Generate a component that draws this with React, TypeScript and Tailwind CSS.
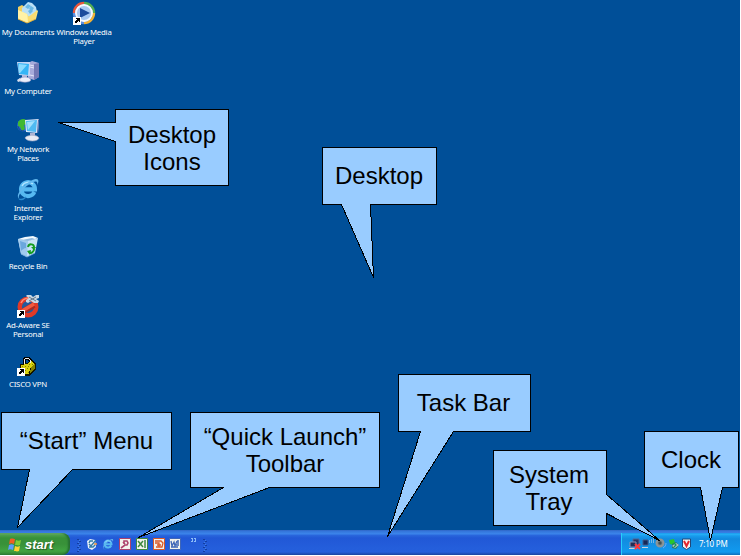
import type { ReactNode } from "react";

function Shortcut() {
  return (
    <g shapeRendering="crispEdges">
      <rect x="1" y="16" width="8" height="8" fill="#fff" />
      <path d="M3 22v-2h1v-1h1v-1h-1v-1h4v4h-1v-1h-1v1h-1v1z" fill="#000" />
    </g>
  );
}

function DocumentsIcon() {
  return (
    <svg viewBox="0 0 24 24" className="size-6 shrink-0">
      <path d="M2 6l4-2 4 3v9l-8 2z" fill="#f0cf63" />
      <path d="M6 7l6-6 4 1 4 4 1 5-8 5-7-4z" fill="#b9e0f7" />
      <path d="M9 6l3-3 3 2-3 3zM15 5l3 2-2 3-3-2zM12 10l3-2 2 2-3 3z" fill="#69b8e6" />
      <path d="M2 9l9 4 2 3 8-7 1 1-2 8-9 4-9-4z" fill="#fbe682" />
      <path d="M2 9l9 4 1 9-10-4z" fill="#fff2a6" />
      <path d="M12 16l9-6-2 8-7 4z" fill="#f9dc70" />
      <path d="M2 18l9 4 9-4" fill="none" stroke="#dfab39" strokeWidth=".9" />
    </svg>
  );
}

function MediaPlayerIcon() {
  return (
    <svg viewBox="0 0 24 24" className="size-6 shrink-0">
      <circle cx="12" cy="12" r="9" fill="#dbe8fa" />
      <path d="M2 12A10 10 0 0 1 12 2" stroke="#e8573c" strokeWidth="2.4" fill="none" />
      <path d="M12 2a10 10 0 0 1 10 10" stroke="#54ad52" strokeWidth="2.4" fill="none" />
      <path d="M22 12a10 10 0 0 1-10 10" stroke="#f2b235" strokeWidth="2.4" fill="none" />
      <path d="M12 22A10 10 0 0 1 2 12" stroke="#5c8fe0" strokeWidth="2.4" fill="none" />
      <circle cx="12" cy="12" r="8" fill="#a9c8f2" stroke="#f5f9ff" strokeWidth="1.8" />
      <path d="M8 7l10 5-10 5z" fill="#1c4a9c" />
      <Shortcut />
    </svg>
  );
}

function ComputerIcon() {
  return (
    <svg viewBox="0 0 24 24" className="size-6 shrink-0">
      <path d="M12 3l4-2 7 2v14l-5 3-6-2z" fill="#a7abda" />
      <path d="M18 4l5-1v14l-5 3z" fill="#7378b4" />
      <path d="M14 5l4 1M14 7l4 1M14 15l4 1" stroke="#e6e8fa" />
      <path d="M1 2h13v14L3 15z" fill="#c4d5f4" />
      <path d="M2 3l11 1-1 11-9-1z" fill="#35b5f6" />
      <path d="M3 4l8 1-7 8H3z" fill="#8bdcff" />
      <path d="M6 15h5v4H6z" fill="#b9bee0" />
      <path d="M3 20c1-4 11-4 12 0-1 3-11 3-12 0z" fill="#eceefa" stroke="#8d91be" strokeWidth=".6" />
      <path d="M1 20l3-2 1 3-3 1z" fill="#d9ddec" />
    </svg>
  );
}

function NetworkIcon() {
  return (
    <svg viewBox="0 0 24 24" className="size-6 shrink-0">
      <circle cx="7" cy="7.5" r="6" fill="#2467ca" />
      <path d="M2 4c2-3 6-4 8-2l1 4-3 1 1 4-3 2-2-4-2-1z" fill="#41b832" />
      <path d="M2 8c0 3 3 5 6 5" stroke="#154492" fill="none" />
      <path d="M9 2l14-1-1 14-12-1z" fill="#dfe9fc" />
      <path d="M10 3l11-1-1 12-9-1z" fill="#50baf2" />
      <path d="M11 4l8-1-7 9z" fill="#a3e0fd" />
      <path d="M22 1l1 1-1 13h-1z" fill="#5169a6" />
      <path d="M14 15h5v4h-5z" fill="#aeb4d2" />
      <path d="M9 20c1-3 12-4 14 0-1 4-12 4-14 0z" fill="#e8eaf3" stroke="#a0a6c4" strokeWidth=".6" />
    </svg>
  );
}

function ExplorerGlyph({ className }: { className: string }) {
  return (
    <svg viewBox="0 0 24 24" className={className}>
      <path d="M18.4 15A7 7 0 1 1 19 12.4H7" fill="none" stroke="#56b9f1" strokeWidth="4.1" />
      <path d="M6 9c2-4 8-5 11-2" fill="none" stroke="#b2e4ff" strokeWidth="1.4" />
      <path d="M3 22c-5-4 8-19 17-20 3 0 3 3 1 6 1-4-1-4-4-3C8 9 1 19 3 22z" fill="#62b8ee" />
      <path d="M3 22c2 1 5 0 7-2" fill="none" stroke="#2b8cd0" strokeWidth="1.3" />
    </svg>
  );
}

function RecycleIcon() {
  return (
    <svg viewBox="0 0 24 24" className="size-6 shrink-0">
      <path d="M2 4l10 2 10-3-3 15-8 4-6-3z" fill="#c8e2f7" />
      <path d="M2 4l10 2-1 16-6-3z" fill="#a0caee" />
      <path d="M4 6l6 2v5c-2 0-4 2-5 3z" fill="#6ba7de" />
      <path d="M2 4l7-2 8-1 5 2-9 3z" fill="#f2faff" />
      <path d="M6 5l5-1 5-1 3 1-7 2z" fill="#8ebae0" />
      <path d="M12 12c1-4 6-3 6 0M18 14c0 3-3 5-5 3" fill="none" stroke="#159b20" strokeWidth="2" />
      <path d="M15 12l5 0-2 3zM15 15l-4 1 3 4z" fill="#159b20" />
      <path d="M5 19l6 3 8-4" fill="none" stroke="#6aa5d5" strokeWidth=".8" />
    </svg>
  );
}

function AdAwareIcon() {
  return (
    <svg viewBox="0 0 24 24" className="size-6 shrink-0">
      <circle cx="12" cy="13" r="8.3" fill="#215b9d" stroke="#df3a28" strokeWidth="4.4" />
      <path d="M5 9c2-5 8-6 11-4" stroke="#ff8c72" strokeWidth="1.5" fill="none" />
      <path d="M6 18L18 11" stroke="#a92a22" strokeWidth="6" />
      <path d="M6 17L18 10" stroke="#f35a3f" strokeWidth="3.5" />
      <path d="M11 1h4l2 2 3-2h3v3l-3 1 3 2-1 2h-4l-3-2-3 2-2-1v-2l3-2-3-2z" fill="#c9d7e3" />
      <path d="M13 3l7 4M20 3l-7 4" stroke="#63798b" strokeWidth="1" />
      <Shortcut />
    </svg>
  );
}

function VpnIcon() {
  return (
    <svg viewBox="0 0 24 24" className="mt-[3px] -mb-[3px] size-6 shrink-0" shapeRendering="crispEdges">
      <path d="M8 9V4l2-2h2l2 2v4" fill="none" stroke="#000" strokeWidth="3" />
      <path d="M8 8V4l2-2h2l2 2v4" fill="none" stroke="#eee" />
      <path d="M4 8l7-1 6-3 3 4v6l-7 6-8-1-1-5z" fill="#151500" />
      <path d="M5 9l6-1 4-3 3 3-4 4-1 6H8l-3-4z" fill="#d9d20e" />
      <path d="M15 11l4-3v5l-5 4z" fill="#858400" />
      <path d="M6 10h1M9 10h1M12 10h1M8 12h1M11 12h1M13 8h1M16 8h1M9 14h1M12 16h1" stroke="#817f00" />
      <path d="M8 8V4l2-2h2l2 2v3" fill="none" stroke="#eee" />
      <g transform="translate(0 -4)"><Shortcut /></g>
    </svg>
  );
}

function DesktopItem({ icon, lines }: { icon: ReactNode; lines: string[] }) {
  return (
    <div className="flex h-[58.6px] w-14 shrink-0 flex-col items-center">
      {icon}
      <div className="mt-[3px] text-center font-['Noto_Sans','DejaVu_Sans',sans-serif] text-[7.8px] leading-[9px] tracking-[-0.22px] whitespace-nowrap text-white">
        {lines.map((line) => <div key={line}>{line}</div>)}
      </div>
    </div>
  );
}

function Callout({ box, points, lines }: { box: string; points: string; lines: string[] }) {
  return (
    <>
      <svg className="absolute inset-0" width="740" height="555" viewBox="0 0 740 555">
        <polygon points={points} fill="#99ccff" stroke="#000" strokeWidth="1" shapeRendering="crispEdges" />
      </svg>
      <div className={`absolute flex flex-col items-center justify-center text-center font-['Liberation_Sans',Arial,sans-serif] text-[24px] leading-[27px] whitespace-nowrap text-black ${box}`}>
        {lines.map((line) => <span key={line}>{line}</span>)}
      </div>
    </>
  );
}

function Flag() {
  return (
    <svg viewBox="0 0 15 15" className="ml-[7px] h-[15px] w-[15px] shrink-0">
      <path d="M3 2c2-1 4 0 5 0L7 7C5 6 4 6 2 7z" fill="#f15d24" />
      <path d="M9 3c2 1 3 1 5 0l-1 5c-2 1-3 0-5 0z" fill="#82cc36" />
      <path d="M2 8c2-1 3-1 5 0l-1 5c-2-1-4-1-5 0z" fill="#5d9dfb" />
      <path d="M8 9c2 1 3 1 5 0l-1 5c-2 1-4 0-5 0z" fill="#ffd133" />
    </svg>
  );
}

function Grip() {
  return (
    <svg className="h-[15px] w-1 shrink-0" viewBox="0 0 4 15" shapeRendering="crispEdges">
      <path d="M0 1.5h2M2 3.5h2M0 5.5h2M2 7.5h2M0 9.5h2M2 11.5h2M0 13.5h2" stroke="#123da2" />
      <path d="M2 2.5h1M1 4.5h1M2 6.5h1M1 8.5h1M2 10.5h1M1 12.5h1" stroke="#3f7fe8" />
    </svg>
  );
}

function OfficeIcon({ kind }: { kind: "access" | "excel" | "powerpoint" | "word" }) {
  const color = { access: "#ad426c", excel: "#3d8940", powerpoint: "#db5a27", word: "#3f66b7" }[kind];
  return (
    <svg viewBox="0 0 12 12" className="size-3 shrink-0">
      <path d="M.5.5h11v11H.5z" fill="#f3f2ed" stroke={color} />
      {kind === "access" && <path d="M5 6V3h3l1 2-1 2H6L2 10M4 4l2 2" fill="none" stroke={color} strokeWidth="1.6" />}
      {kind === "excel" && <path d="M2 3l5 6M7 3L2 9M8 3h2M8 5h2M8 7h2M8 9h2" stroke={color} strokeWidth="1.5" />}
      {kind === "powerpoint" && <path d="M2 3h6l2 2-1 4H6M2 5h4v4H3M4 7h4" fill="none" stroke={color} strokeWidth="1.3" />}
      {kind === "word" && <path d="M2 3l1 5 2-4 1 4 2-5M7 7h3M2 9h7M8 3h2M8 5h2" fill="none" stroke={color} strokeWidth="1.3" />}
    </svg>
  );
}

function QuickLaunch() {
  return (
    <div className="mt-[8px] ml-[7px] flex h-[15px] items-start">
      <Grip />
      <svg viewBox="0 0 12 12" className="ml-[5px] size-3 shrink-0">
        <path d="M1 3l3-2 5 1 1 7-4 3-4-2z" fill="#e9f2fa" />
        <path d="M3 5l1-2h3M3 6l2 2 5-6M3 9h4l2-2" fill="none" stroke="#347da8" strokeWidth="1.4" />
        <path d="M8 6h3" stroke="#f1993f" strokeWidth="1.5" />
      </svg>
      <ExplorerGlyph className="ml-[4px] size-3 shrink-0" />
      <div className="ml-[5px] flex gap-[4.8px]">
        <OfficeIcon kind="access" />
        <OfficeIcon kind="excel" />
        <OfficeIcon kind="powerpoint" />
        <OfficeIcon kind="word" />
      </div>
      <svg viewBox="0 0 6 4" className="ml-[10px] h-1 w-1.5 shrink-0" shapeRendering="crispEdges">
        <path d="M0 .5h2M1 2.5h1M0 3.5h2M3 .5h2M4 2.5h1M3 3.5h2M1.5 0v4M4.5 0v4" stroke="#8cbdf8" />
      </svg>
      <div className="ml-[6px]"><Grip /></div>
    </div>
  );
}

function NetworkTrayIcon({ disconnected }: { disconnected?: boolean }) {
  return (
    <svg viewBox="0 0 12 12" className="size-3 shrink-0">
      {disconnected ? (
        <>
          <path d="M4 1h6v6H4z" fill="#263465" stroke="#526797" />
          <path d="M1 4h6v5H1z" fill="#202e57" stroke="#8295bd" />
          <path d="M0 10h8v1H0z" fill="#c9d0dc" />
          <path d="M6 6l5 5M11 6l-5 5" stroke="#ff363b" strokeWidth="2" />
        </>
      ) : (
        <>
          <path d="M1 2h5v5H1z" fill="#172957" stroke="#415a8c" />
          <path d="M0 9h6v1H0z" fill="#c9d1dc" />
          <path d="M7.5 2v3M9.5 1v4M11.5 0v5" stroke="#91c2e6" strokeWidth=".8" />
        </>
      )}
    </svg>
  );
}

function Tray() {
  return (
    <div className="mt-[3px] ml-auto flex h-[22px] w-[119px] items-start border-l border-[#27d0fa] bg-[linear-gradient(to_bottom,#1790e6_0px,#27b1f7_1px,#179bec_3px,#128bdf_6px,#119aef_19px,#0f6dba_22px)] pt-[5px]">
      <div className="ml-[7px] flex gap-[1px]">
        <NetworkTrayIcon disconnected />
        <NetworkTrayIcon />
        <svg viewBox="0 0 12 12" className="size-3 shrink-0">
          <circle cx="5" cy="5" r="3.5" fill="#7b878a" stroke="#8d9698" strokeWidth="2" />
          <circle cx="5" cy="5" r="1.7" fill="#435357" />
          <path d="M8 10c2-1 3-3 3-5" fill="none" stroke="#73aafa" />
        </svg>
        <svg viewBox="0 0 12 12" className="size-3 shrink-0">
          <path d="M1 2l5-1 1 4-2 2-3-1z" fill="#28c52d" />
          <path d="M4 6l4-2 3 3-3 4-4-1z" fill="#277a68" />
          <path d="M4 8l4-3 3 2-4 3z" fill="#b3c5cd" />
          <path d="M6 5l2 2-2 2" fill="none" stroke="#17994c" strokeWidth="1.3" />
        </svg>
        <svg viewBox="0 0 12 12" className="size-3 shrink-0">
          <path d="M1.5 1h8v8l-4 2.5-4-2.5z" fill="#f5f4f0" stroke="#234778" />
          <path d="M3 3l2.5 5L8 3" fill="none" stroke="#e3262d" strokeWidth="2" />
        </svg>
      </div>
      <span className="ml-[6px] font-['Noto_Sans','DejaVu_Sans',sans-serif] text-[8px] leading-[12px] tracking-[-0.23px] whitespace-nowrap text-white">7:10 PM</span>
    </div>
  );
}

export default function App() {
  return (
    <main className="h-[556px] w-[741px] overflow-hidden bg-white">
      <div className="relative flex h-[555px] w-[740px] flex-col overflow-hidden bg-[#004f98]">
        <section className="flex h-[530px] pt-px">
          <div className="flex w-14 flex-col">
            <DesktopItem icon={<DocumentsIcon />} lines={["My Documents"]} />
            <DesktopItem icon={<ComputerIcon />} lines={["My Computer"]} />
            <DesktopItem icon={<NetworkIcon />} lines={["My Network", "Places"]} />
            <DesktopItem icon={<ExplorerGlyph className="size-6 shrink-0" />} lines={["Internet", "Explorer"]} />
            <DesktopItem icon={<RecycleIcon />} lines={["Recycle Bin"]} />
            <DesktopItem icon={<AdAwareIcon />} lines={["Ad-Aware SE", "Personal"]} />
            <DesktopItem icon={<VpnIcon />} lines={["CISCO VPN"]} />
            <div className="ml-[25px] h-2 w-2 rounded-full bg-[#0828b5]" />
          </div>
          <DesktopItem icon={<MediaPlayerIcon />} lines={["Windows Media", "Player"]} />
        </section>

        <footer className="flex h-[25px] shrink-0 bg-[linear-gradient(to_bottom,#2f63c1_0px,#3474d9_1px,#397fe5_3px,#3c86ec_4px,#2a68dd_5px,#2158d6_8px,#245edb_18px,#255fdc_22px,#1b439e_25px)]">
          <div className="mt-[3px] flex h-[22px] w-[70px] items-center rounded-r-[8px] bg-[linear-gradient(to_bottom,#7abb78_0px,#4d9f4b_2px,#389138_5px,#389139_11px,#41a441_18px,#2f7f32_22px)] shadow-[inset_-2px_0_2px_#256e32]">
            <Flag />
            <span className="ml-[3px] font-['Liberation_Sans',Arial,sans-serif] text-[13px] leading-none font-bold text-white italic [text-shadow:1px_1px_1px_#245b25]">start</span>
          </div>
          <QuickLaunch />
          <Tray />
        </footer>

        <Callout box="left-[115px] top-[109px] h-[77px] w-[114px]" points="115.5,109.5 228.5,109.5 228.5,185.5 115.5,185.5 115.5,141.5 58.5,122.5 115.5,122.5" lines={["Desktop", "Icons"]} />
        <Callout box="left-[322px] top-[147px] h-[56px] w-[114px]" points="322.5,147.5 436.5,147.5 436.5,204.5 370.5,204.5 373.5,277.5 341.5,204.5 322.5,204.5" lines={["Desktop"]} />
        <Callout box="left-[397px] top-[374px] h-[56px] w-[133px]" points="398.5,374.5 530.5,374.5 530.5,431.5 453.5,431.5 387.5,536.5 420.5,431.5 398.5,431.5" lines={["Task Bar"]} />
        <Callout box="left-[1px] top-[412px] h-[56px] w-[171px]" points="1.5,412.5 171.5,412.5 171.5,469.5 72.5,469.5 17.5,527.5 29.5,469.5 1.5,469.5" lines={["“Start” Menu"]} />
        <Callout box="left-[190px] top-[412px] h-[76px] w-[190px]" points="190.5,412.5 379.5,412.5 379.5,487.5 269.5,487.5 138.5,537.5 223.5,487.5 190.5,487.5" lines={["“Quick Launch”", "Toolbar"]} />
        <Callout box="left-[492px] top-[450px] h-[76px] w-[114px]" points="493.5,450.5 606.5,450.5 606.5,494.5 659.5,540.5 606.5,513.5 606.5,525.5 493.5,525.5" lines={["System", "Tray"]} />
        <Callout box="left-[644px] top-[431px] h-[57px] w-[94px]" points="644.5,431.5 738.5,431.5 738.5,487.5 722.5,487.5 710.5,540.5 700.5,487.5 644.5,487.5" lines={["Clock"]} />
      </div>
    </main>
  );
}
